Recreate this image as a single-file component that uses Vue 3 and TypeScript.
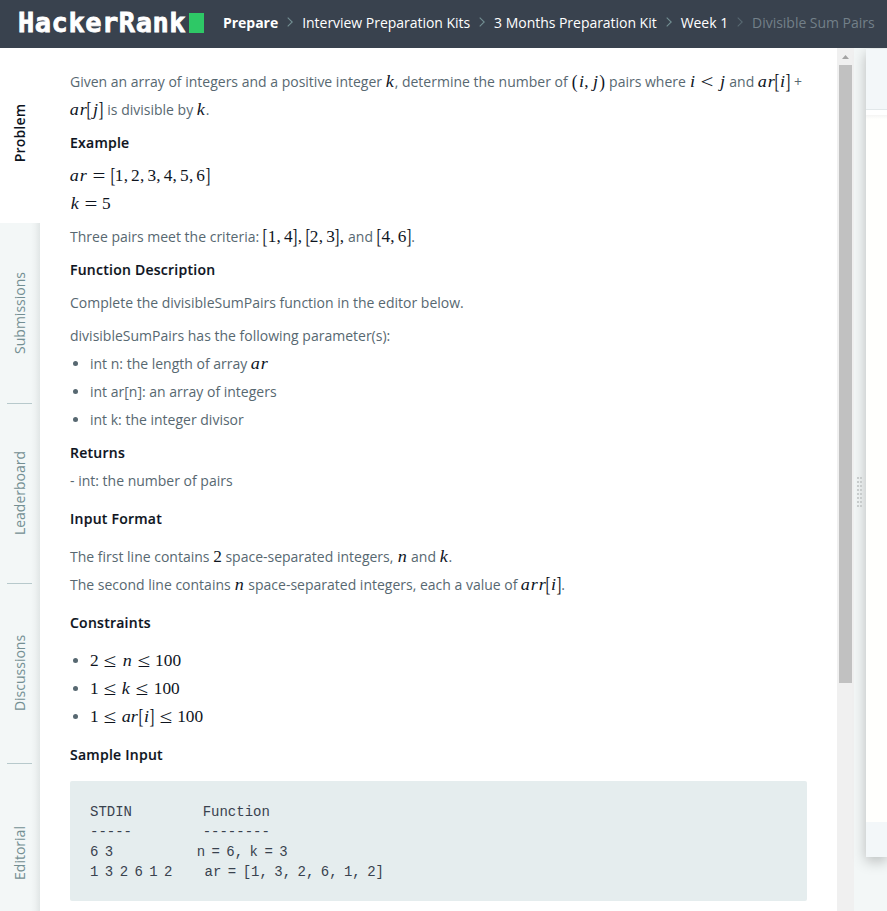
<script setup lang="ts">
interface Glyph {
  text: string
  kind: string
}
interface Segment {
  text: string
  glyphs: Glyph[]
}
interface Block {
  kind: 'text' | 'heading' | 'list'
  lines: string[]
  roomy?: boolean
}

const crumbs = ['Prepare', 'Interview Preparation Kits', '3 Months Preparation Kit', 'Week 1', 'Divisible Sum Pairs']
const tabs = ['Problem', 'Submissions', 'Leaderboard', 'Discussions', 'Editorial']

const kinds: Record<string, string> = {
  '[': 'bracket', ']': 'bracket', '(': 'paren', ')': 'paren', ',': 'comma',
  '=': 'rel', '<': 'rel', '≤': 'rel',
}

function glyph(c: string): Glyph {
  if (kinds[c]) return { text: c, kind: kinds[c] }
  return { text: c, kind: /[a-z]/.test(c) ? `var var-${c}` : 'digit' }
}

// Text between dollar signs is set as a formula.
function parse(line: string): Segment[] {
  return line.split('$').map((text, i) => ({
    text,
    glyphs: i % 2 ? [...text].map(glyph) : [],
  })).filter((s) => s.text !== '')
}

const blocks: Block[] = [
  { kind: 'text', lines: ['Given an array of integers and a positive integer $k$, determine the number of $(i,j)$ pairs where $i<j$ and $ar[i]$ +', '$ar[j]$ is divisible by $k$.'] },
  { kind: 'heading', lines: ['Example'] },
  { kind: 'text', lines: ['$ar=[1,2,3,4,5,6]$', '$k=5$'] },
  { kind: 'text', lines: ['Three pairs meet the criteria: $[1,4],[2,3],$ and $[4,6]$.'] },
  { kind: 'heading', lines: ['Function Description'] },
  { kind: 'text', lines: ['Complete the divisibleSumPairs function in the editor below.'] },
  { kind: 'text', lines: ['divisibleSumPairs has the following parameter(s):'] },
  { kind: 'list', lines: ['int n: the length of array $ar$', 'int ar[n]: an array of integers', 'int k: the integer divisor'] },
  { kind: 'heading', lines: ['Returns'] },
  { kind: 'text', lines: ['- int: the number of pairs'] },
  { kind: 'heading', lines: ['Input Format'], roomy: true },
  { kind: 'text', lines: ['The first line contains $2$ space-separated integers, $n$ and $k$.', 'The second line contains $n$ space-separated integers, each a value of $arr[i]$.'] },
  { kind: 'heading', lines: ['Constraints'], roomy: true },
  { kind: 'list', lines: ['$2≤n≤100$', '$1≤k≤100$', '$1≤ar[i]≤100$'] },
  { kind: 'heading', lines: ['Sample Input'], roomy: true },
]

const sample = [
  'STDIN' + ' '.repeat(11) + 'Function',
  '-----' + ' '.repeat(11) + '--------',
  '6 3' + ' '.repeat(13) + 'n = 6, k = 3',
  '1 3 2 6 1 2' + ' '.repeat(5) + 'ar = [1, 3, 2, 6, 1, 2]',
].join('\n')
</script>

<template>
  <div class="page">
    <header class="top">
      <div class="logo"><span class="word">HackerRank</span><span class="cursor"></span></div>
      <nav class="crumbs">
        <template v-for="(crumb, i) in crumbs" :key="crumb">
          <svg v-if="i > 0" class="chev" :class="{ dim: i === crumbs.length - 1 }" viewBox="0 0 6 10">
            <path d="M0.7 0.7 L5.2 5 L0.7 9.3" />
          </svg>
          <span class="crumb" :class="`crumb-${i}`">{{ crumb }}</span>
        </template>
      </nav>
    </header>

    <div class="body">
      <aside class="tabs">
        <div v-for="(tab, i) in tabs" :key="tab" class="tab" :class="{ active: i === 0 }">
          <span>{{ tab }}</span>
        </div>
      </aside>

      <main class="problem">
        <div v-for="(block, b) in blocks" :key="b" class="block" :class="[block.kind, { roomy: block.roomy }]">
          <div v-for="line in block.lines" :key="line" class="line">
            <template v-for="(seg, s) in parse(line)" :key="s">
              <span v-if="seg.glyphs.length" class="math"><span v-for="(g, k) in seg.glyphs" :key="k" class="g" :class="g.kind"><span class="ink">{{ g.text }}</span></span></span>
              <template v-else>{{ seg.text }}</template>
            </template>
          </div>
        </div>
        <pre class="sample">{{ sample }}</pre>
      </main>

      <div class="scrollbar">
        <svg class="arrow" viewBox="0 0 17 17"><path d="M5 11 L8.5 7 L12 11 Z" /></svg>
        <div class="thumb"></div>
      </div>

      <div class="gutter">
        <div class="grip"><i v-for="n in 16" :key="n"></i></div>
      </div>

      <section class="editor">
        <div class="bar"></div>
        <div class="strip"></div>
        <div class="code"></div>
        <div class="foot"></div>
      </section>
    </div>
  </div>
</template>

<style>
body {
  margin: 0;
  overflow: hidden;
}
</style>

<style scoped>
.page {
  width: 887px;
  height: 911px;
  display: flex;
  flex-direction: column;
  overflow: hidden;
  background: #fff;
  font-family: "Open Sans", sans-serif;
  font-size: 14px;
  color: #576871;
}
.top {
  flex: none;
  height: 48px;
  box-sizing: border-box;
  display: flex;
  align-items: center;
  padding-bottom: 2px;
  background: #39424e;
  white-space: nowrap;
}
.logo {
  display: flex;
  align-items: center;
  width: 186px;
  margin-left: 18px;
}
.word {
  font: bold 27px/32px "DejaVu Sans Mono", monospace;
  letter-spacing: 0.55px;
  width: 171px;
  color: #fff;
  -webkit-text-stroke: 0.8px #fff;
}
.cursor {
  width: 15px;
  height: 20px;
  background: #2ec866;
}
.crumbs {
  display: flex;
  align-items: center;
  margin-left: 19px;
  padding-bottom: 2px;
}
.crumb {
  color: #fff;
  font-weight: 500;
  letter-spacing: -0.03px;
}
.crumb-0 {
  font-weight: 700;
}
.crumb-4 {
  color: #738089;
  font-weight: 400;
}
.chev {
  width: 6px;
  height: 10px;
  margin: 0 9px;
  fill: none;
  stroke: #738f93;
  stroke-width: 1.1;
}
.chev.dim {
  stroke: #576871;
}
.body {
  flex: 1;
  min-height: 0;
  display: flex;
  overflow: hidden;
  background: linear-gradient(to right, #fff 837px, #f3f7f7 837px);
}
.tabs {
  flex: none;
  width: 40px;
  display: flex;
  flex-direction: column;
  background: linear-gradient(to right, #f3f7f7 31px, #eef2f2 35px, #e1e6e6 40px);
}
.tab {
  position: relative;
  flex: none;
  height: 180px;
  display: flex;
  align-items: center;
  justify-content: center;
  color: #738f93;
}
.tab span {
  flex: none;
  transform: rotate(-90deg);
  line-height: 20px;
}
.tab:not(.active):not(:last-child)::after {
  content: "";
  position: absolute;
  left: 7px;
  bottom: -1px;
  width: 25px;
  height: 1px;
  background: #b7c9cc;
}
.tab.active {
  height: 175px;
  box-sizing: border-box;
  padding-bottom: 5px;
  background: #fff;
  color: #0e141e;
  font-weight: 600;
  letter-spacing: 0.15px;
}
.problem {
  flex: none;
  width: 737px;
  padding: 20px 30px 0;
  line-height: 28px;
}
.block {
  margin-bottom: 5px;
}
.line {
  height: 28px;
  white-space: nowrap;
}
.heading {
  color: #0e141e;
  font-weight: 600;
  letter-spacing: 0.25px;
  -webkit-text-stroke: 0.15px currentColor;
}
.block:nth-child(9),
.block:nth-child(7) {
  margin-bottom: 0;
}
.block.roomy {
  margin: 10px 0;
}
.block.roomy:nth-last-child(2) {
  margin-bottom: 12px;
}
.list .line {
  padding-left: 20px;
  position: relative;
}
.list .line::before {
  content: "";
  position: absolute;
  left: 3px;
  top: 11px;
  width: 5px;
  height: 5px;
  border-radius: 50%;
  background: #576871;
}
.math {
  display: inline-flex;
  align-items: baseline;
  height: 18px;
  line-height: 18px;
  font-family: "Liberation Serif", serif;
  font-size: 17.3px;
  color: #0e141e;
}
.g {
  display: flex;
  justify-content: center;
  width: 0.5em;
}
.ink {
  display: block;
}
.var {
  font-style: italic;
}
.var-a { width: 0.529em; }
.var-r { width: 0.451em; }
.var-k { width: 0.521em; }
.var-n { width: 0.6em; }
.var-i { width: 0.345em; }
.var-j { width: 0.412em; }
.var .ink {
  transform: scaleX(1.05);
}
.bracket {
  width: 0.278em;
}
.bracket .ink {
  transform: scale(0.85, 1.18);
}
.paren {
  width: 0.389em;
}
.paren .ink {
  transform: scaleY(1.1);
}
.comma {
  width: 0.278em;
  margin-right: 0.167em;
}
.comma:last-child {
  margin-right: 0;
}
.rel {
  width: 0.778em;
  margin: 0 0.278em;
}
.rel .ink {
  transform: scale(1.32, 1.12);
}
.sample {
  box-sizing: border-box;
  height: 120px;
  margin: 0;
  padding: 21px 20px 19px;
  border-radius: 2px;
  background: #e5edee;
  color: #39424e;
  font: 14px/20px "Liberation Mono", monospace;
  word-spacing: -1.98px;
}
.scrollbar {
  flex: none;
  width: 17px;
  background: #f0f0f0;
}
.arrow {
  display: block;
  width: 17px;
  height: 17px;
  fill: #a3a3a3;
}
.thumb {
  width: 13px;
  height: 618px;
  margin: 0 2px;
  background: #c1c1c1;
}
.gutter {
  flex: none;
  width: 12px;
  background: #f3f7f7;
}
.grip {
  position: relative;
  z-index: 1;
  display: grid;
  grid-template-columns: 2px 2px;
  grid-auto-rows: 2px;
  gap: 2px 1px;
  margin: 429px 0 0 3px;
}
.grip i {
  background: #c8cccc;
}
.editor {
  flex: 1;
  height: 808px;
  margin-top: 1px;
  display: flex;
  flex-direction: column;
  background: #fffffd;
  box-shadow: 0 4px 14px rgba(0, 0, 0, 0.25);
}
.bar {
  height: 60px;
  background: #f3f7f9;
  border-bottom: 1px solid #e2e8ea;
}
.strip {
  height: 5px;
  background: #fff;
}
.code {
  flex: 1;
  background: linear-gradient(#f5f5f4, #fffffd 4px);
}
.foot {
  height: 35px;
  background: #f3f7f9;
}
</style>
